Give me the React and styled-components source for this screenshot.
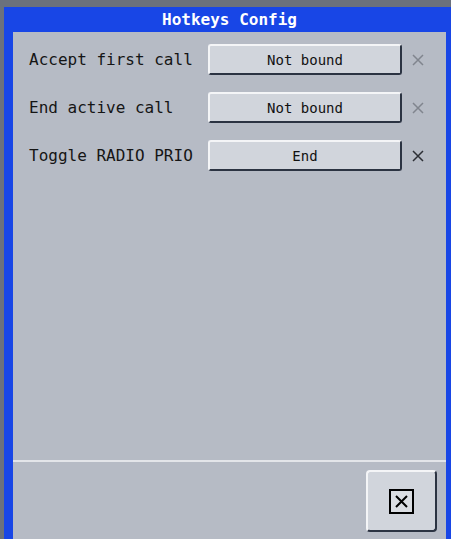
import React from 'react';
import styled, {createGlobalStyle} from 'styled-components';

const Global = createGlobalStyle`
  html, body {
    margin: 0;
    padding: 0;
    background: #6b717c;
    overflow: hidden;
  }
`;

const Window = styled.div`
  margin: 7px 0 0 4px;
  width: 451px;
  box-sizing: border-box;
  background: #1846e6;
  padding: 0 9px 9px;
  font-family: "DejaVu Sans Mono", "Liberation Mono", monospace;
`;

const TitleBar = styled.div`
  height: 25px;
  display: flex;
  align-items: center;
  justify-content: center;
  color: #ffffff;
  font-weight: bold;
  font-size: 16px;
`;

const Panel = styled.div`
  background: #b6bbc5;
  display: flex;
  flex-direction: column;
`;

const Body = styled.div`
  height: 428px;
  box-sizing: border-box;
  padding: 12px 22px 0 16px;
  display: flex;
  flex-direction: column;
  gap: 17px;
`;

const Row = styled.div`
  display: grid;
  grid-template-columns: 179px 194px 22px;
  align-items: center;
`;

const Label = styled.span`
  font-size: 16px;
  color: #151515;
`;

const KeyButton = styled.button`
  height: 31px;
  box-sizing: border-box;
  background: #d1d5dc;
  border: 2px solid #2b3342;
  border-top-color: #f4f5f7;
  border-left-color: #f4f5f7;
  border-radius: 3px;
  font-family: inherit;
  font-size: 14px;
  color: #111;
  padding: 0;
`;

const Clear = styled.button`
  border: 0;
  background: none;
  padding: 0;
  margin-left: 10px;
  width: 12px;
  height: 12px;
  display: flex;
  color: ${p => (p.active ? '#2c2f35' : '#80858e')};
`;

const Divider = styled.div`
  height: 2px;
  background: #e3e5e9;
`;

const Footer = styled.div`
  display: flex;
  justify-content: flex-end;
  padding: 8px 9px 20px;
`;

const CloseButton = styled.button`
  width: 71px;
  height: 62px;
  box-sizing: border-box;
  background: #d1d5dc;
  border: 2px solid #2b3342;
  border-top-color: #f4f5f7;
  border-left-color: #f4f5f7;
  border-radius: 4px;
  display: flex;
  align-items: center;
  justify-content: center;
  padding: 0;
`;

function XIcon(){
  return (
    <svg width="12" height="12" viewBox="0 0 12 12">
      <path d="M1 1 L11 11 M11 1 L1 11" stroke="currentColor" strokeWidth="1.5" fill="none"/>
    </svg>
  )
}

function CloseIcon(){
  return (
    <svg width="25" height="25" viewBox="0 0 25 25">
      <rect x="1" y="1" width="23" height="23" fill="#dadde2" stroke="#000" strokeWidth="2"/>
      <path d="M7 7 L18 18 M18 7 L7 18" stroke="#000" strokeWidth="2" fill="none"/>
    </svg>
  )
}

let hotkeys = [
  {label: "Accept first call", key: null},
  {label: "End active call", key: null},
  {label: "Toggle RADIO PRIO", key: "End"},
];

export default function App(){
  return (
    <>
      <Global />
      <Window>
        <TitleBar>Hotkeys Config</TitleBar>
        <Panel>
          <Body>
            {hotkeys.map(item => (
              <Row key={item.label}>
                <Label>{item.label}</Label>
                <KeyButton>{item.key || "Not bound"}</KeyButton>
                <Clear active={!!item.key}><XIcon /></Clear>
              </Row>
            ))}
          </Body>
          <Divider />
          <Footer>
            <CloseButton><CloseIcon /></CloseButton>
          </Footer>
        </Panel>
      </Window>
    </>
  )
}
